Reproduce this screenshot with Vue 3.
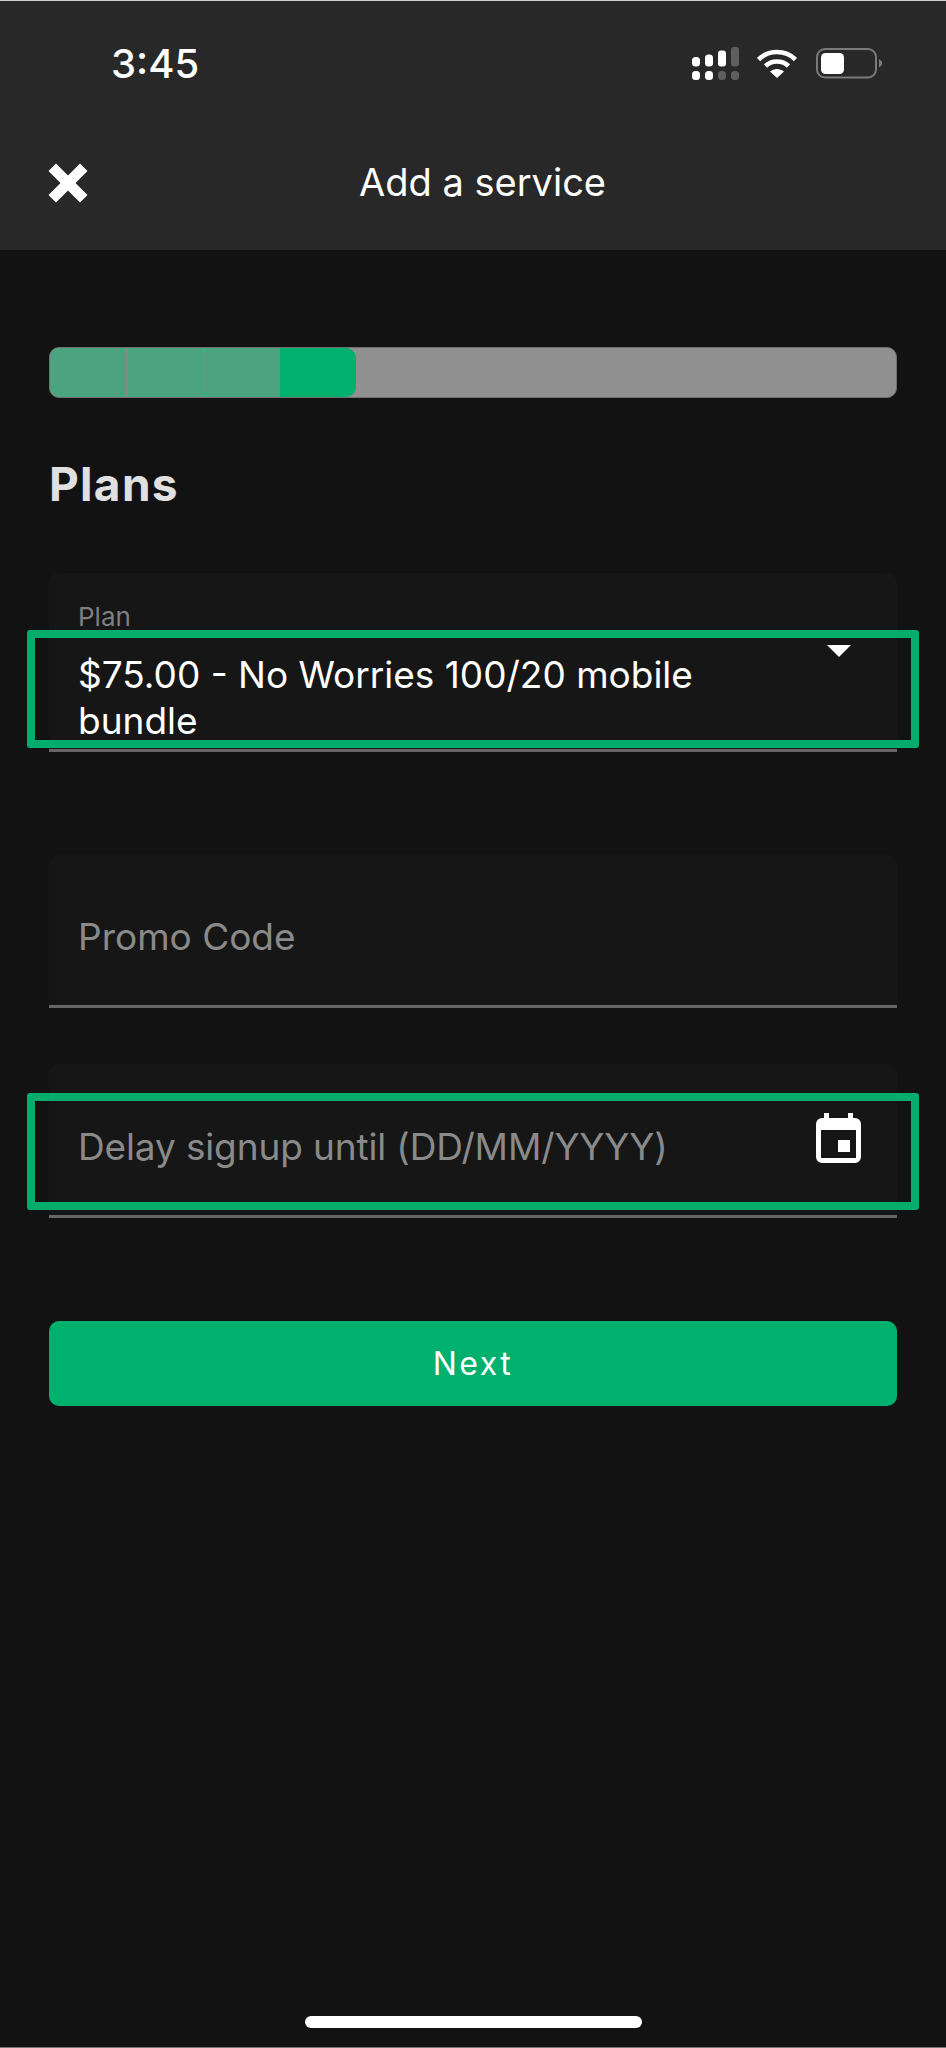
<template>
  <div class="screen">
    <header class="header">
      <div class="status">
        <span class="time">3:45</span>
        <div class="status-icons">
          <svg class="signal" width="47" height="33" viewBox="0 0 47 33" aria-hidden="true">
            <rect x="0" y="10" width="8" height="9.5" rx="3.5" fill="#fff" />
            <rect x="13" y="7.5" width="8" height="12" rx="3.5" fill="#fff" />
            <rect x="26" y="3.5" width="8" height="16" rx="3" fill="#fff" />
            <rect x="39" y="0" width="8" height="19.5" rx="3" fill="#5e5e5e" />
            <rect x="0" y="24" width="8" height="9" rx="3.5" fill="#fff" />
            <rect x="13" y="24" width="8" height="9" rx="3.5" fill="#fff" />
            <rect x="26" y="24" width="8" height="9" rx="3.5" fill="#5e5e5e" />
            <rect x="39" y="24" width="8" height="9" rx="3.5" fill="#5e5e5e" />
          </svg>
          <svg class="wifi" width="40" height="30" viewBox="0 0 40 30" aria-hidden="true">
            <path d="M1.5 11.5 C11.5 1.5 28.5 1.5 38.5 11.5" fill="none" stroke="#fff" stroke-width="4.6" stroke-linecap="butt" />
            <path d="M8.5 18 C14.5 12 25.5 12 31.5 18" fill="none" stroke="#fff" stroke-width="4.6" stroke-linecap="butt" />
            <path d="M13 23.5 C17 20 23 20 27 23.5 L20 30 Z" fill="#fff" />
          </svg>
          <svg class="battery" width="66" height="31" viewBox="0 0 66 31" aria-hidden="true">
            <rect x="1" y="1" width="59" height="28.5" rx="8" fill="none" stroke="#7a7a7a" stroke-width="2" />
            <rect x="5" y="5" width="23" height="21" rx="4.5" fill="#fff" />
            <path d="M63 11 L66 13.5 V17 L63 19.5 Z" fill="#7a7a7a" />
          </svg>
        </div>
      </div>
      <div class="nav">
        <svg class="close" width="40" height="40" viewBox="0 0 40 40" aria-hidden="true">
          <path d="M0.5 8 L8 0.5 L20 12.5 L32 0.5 L39.5 8 L27.5 20 L39.5 32 L32 39.5 L20 27.5 L8 39.5 L0.5 32 L12.5 20 Z" fill="#fff" />
        </svg>
        <h1 class="title">Add a service</h1>
      </div>
    </header>

    <main class="main">
      <div class="progress">
        <div class="step done"></div>
        <div class="step done"></div>
        <div class="step done"></div>
        <div class="step current"></div>
      </div>

      <h2 class="heading">Plans</h2>

      <div class="field select">
        <span class="label">Plan</span>
        <span class="value">$75.00 - No Worries 100/20 mobile bundle</span>
        <span class="caret"></span>
        <span class="mark mark-plan"></span>
      </div>

      <div class="field promo">
        <span class="placeholder">Promo Code</span>
      </div>

      <div class="field delay">
        <span class="placeholder">Delay signup until (DD/MM/YYYY)</span>
        <svg class="calendar" width="45" height="50" viewBox="0 0 45 50" aria-hidden="true">
          <path fill-rule="evenodd" d="M8 0 H13 V5 H32 V0 H37 V5 H39 A6 6 0 0 1 45 11 V44 A6 6 0 0 1 39 50 H6 A6 6 0 0 1 0 44 V11 A6 6 0 0 1 6 5 H8 Z M5 17 V45 H40 V17 Z" fill="#fff" />
          <rect x="22" y="27" width="12" height="12" fill="#fff" />
        </svg>
        <span class="mark mark-delay"></span>
      </div>

      <button class="next" type="button">Next</button>
    </main>

    <div class="home-bar"></div>
  </div>
</template>

<script setup>
</script>

<style>
html, body { margin: 0; background: #121212; }
</style>

<style scoped>
.screen {
  width: 946px;
  height: 2048px;
  box-sizing: border-box;
  background: #121212;
  border-bottom: 1px solid #7a7a7a;
  color: #fff;
  font-family: Inter, "Liberation Sans", sans-serif;
  display: flex;
  flex-direction: column;
  overflow: hidden;
  position: relative;
}
.header {
  height: 250px;
  flex: none;
  box-sizing: border-box;
  background: #282828;
  border-top: 1px solid #cfcfcf;
  display: flex;
  flex-direction: column;
}
.status {
  display: flex;
  justify-content: space-between;
  align-items: flex-start;
  padding: 46px 64px 0 111px;
  height: 140px;
  box-sizing: border-box;
}
.time {
  font-size: 40px;
  font-weight: 500;
  line-height: 34px;
}
.status-icons {
  display: flex;
  align-items: flex-start;
  gap: 18px;
}
.wifi { margin-top: 1px; }
.battery { margin-top: 1px; margin-left: 1px; }
.nav {
  position: relative;
  display: flex;
  align-items: center;
  justify-content: center;
  height: 80px;
  padding-top: 1px;
}
.close {
  position: absolute;
  left: 48px;
  top: 22px;
}
.title {
  margin: 0 0 0 19px;
  font-size: 38px;
  font-weight: 400;
}
.main {
  padding: 97px 49px 0 49px;
  display: flex;
  flex-direction: column;
}
.progress {
  height: 51px;
  box-sizing: border-box;
  background: #909090;
  border: 1px solid #6f6f6f;
  border-radius: 10px;
  display: flex;
  overflow: hidden;
}
.step {
  width: 76.8px;
  flex: none;
  box-sizing: border-box;
}
.done {
  background: #4ba37f;
  border-right: 1px solid #8a8a8a;
}
.done:nth-child(3) { border-right: 0; }
.current {
  background: #00b16e;
  width: 75.5px;
  border-radius: 0 10px 10px 0;
}
.heading {
  margin: 63px 0 0 0;
  font-size: 46px;
  line-height: 46px;
  letter-spacing: 1.3px;
  font-weight: 700;
  color: #e0e0e0;
}
.field {
  position: relative;
  background: #161616;
  border-radius: 10px 10px 0 0;
  border-bottom: 3px solid #666;
  box-sizing: border-box;
  padding: 0 29px;
}
.select {
  margin-top: 66px;
  height: 179px;
  padding-top: 28px;
  display: flex;
  flex-direction: column;
}
.label {
  font-size: 26px;
  line-height: 32px;
  color: #7f7f7f;
}
.value {
  margin-top: 19px;
  padding-right: 100px;
  font-size: 37px;
  line-height: 46px;
  color: #fff;
}
.caret {
  position: absolute;
  left: 778px;
  top: 72px;
  border-left: 12px solid transparent;
  border-right: 12px solid transparent;
  border-top: 12px solid #fff;
}
.promo {
  margin-top: 103px;
  height: 153px;
  padding-top: 60px;
}
.delay {
  margin-top: 56px;
  height: 154px;
  padding-top: 61px;
}
.placeholder {
  font-size: 37px;
  line-height: 44px;
  color: #8a8a8a;
  display: block;
}
.delay .placeholder { letter-spacing: -0.13px; }
.calendar {
  position: absolute;
  left: 767px;
  top: 49px;
}
.mark {
  position: absolute;
  left: -22px;
  width: 892px;
  box-sizing: border-box;
  border: 8px solid #04ad6c;
  border-radius: 3px;
  pointer-events: none;
}
.mark-plan { top: 57px; height: 118px; }
.mark-delay { top: 29px; height: 117px; }
.next {
  margin-top: 103px;
  height: 85px;
  border: 0;
  border-radius: 10px;
  background: #00b16e;
  color: #fff;
  font-family: Inter, "Liberation Sans", sans-serif;
  font-size: 32px;
  letter-spacing: 2.5px;
  font-weight: 400;
  padding: 0;
}
.home-bar {
  position: absolute;
  left: 305px;
  bottom: 19px;
  width: 337px;
  height: 12px;
  border-radius: 6px;
  background: #fff;
}
</style>
